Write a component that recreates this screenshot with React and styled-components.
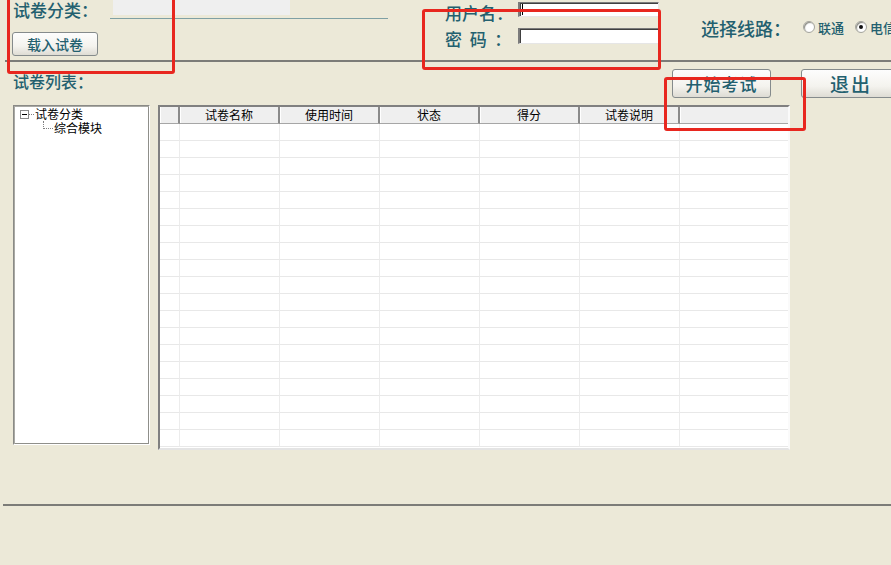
import React from 'react'
import styled, { createGlobalStyle } from 'styled-components'

const GlobalStyle = createGlobalStyle`
  html, body {
    margin: 0;
    padding: 0;
    background: #ece9d8;
  }
  * {
    box-sizing: border-box;
  }
`

const Page = styled.div`
  position: relative;
  width: 891px;
  height: 565px;
  overflow: hidden;
  background: #ece9d8;
  font-family: "Noto Sans CJK SC", "Noto Sans", sans-serif;
  color: #23606f;
`

const TopBar = styled.div`
  display: flex;
  align-items: flex-start;
  height: 60px;
`

const LeftBlock = styled.div`
  flex-shrink: 0;
  width: 445px;
  padding-left: 13px;
`

const CategoryRow = styled.div`
  display: flex;
  align-items: flex-start;
  height: 20px;
`

const Caption = styled.span`
  font-size: 17px;
  font-weight: 500;
  line-height: 20px;
  white-space: nowrap;
`

const LineField = styled.div`
  margin-left: 12px;
  width: 278px;
  height: 19px;
  border-bottom: 1px solid #7fa0a4;
  padding-left: 3px;

  span {
    display: block;
    width: 177px;
    height: 15px;
    background: #efefef;
  }
`

const Button = styled.button`
  display: flex;
  align-items: center;
  justify-content: center;
  flex-shrink: 0;
  width: ${p => p.w}px;
  height: ${p => p.h}px;
  padding: 0;
  border: 1px solid #858b8c;
  border-radius: 3px;
  background: linear-gradient(#fdfdfd, #f4f3ee 60%, #dedcd4);
  color: #23606f;
  font-family: "Noto Sans CJK SC", sans-serif;
  font-size: ${p => p.size}px;
  font-weight: 500;
  letter-spacing: ${p => p.spacing || 0}px;
  white-space: nowrap;
`

const LoadButton = styled(Button)`
  margin-top: 12px;
  margin-left: -1px;
`

const MidBlock = styled.div`
  flex-shrink: 0;
  width: 256px;
  padding-top: 2px;
`

const LoginRow = styled.div`
  display: flex;
  align-items: flex-start;
  height: ${p => p.h}px;
`

const LoginLabel = styled.span`
  width: 73px;
  font-size: 17px;
  font-weight: 500;
  line-height: 20px;
  margin-top: ${p => p.top || 0}px;
  white-space: pre;
`

const TextInput = styled.div`
  width: 141px;
  height: ${p => p.h}px;
  background: #fff;
  border-style: solid;
  border-width: 1px 1px 1px 2px;
  border-color: #7b7b7b #e6e6e6 #e6e6e6 #7b7b7b;
  box-shadow: inset 1px 1px 0 #404040;
  position: relative;
`

const Caret = styled.span`
  position: absolute;
  left: 2px;
  top: 1px;
  width: 1px;
  height: 11px;
  background: #000;
`

const RightBlock = styled.div`
  flex: 1;
  min-width: 0;
  display: flex;
  align-items: center;
  padding-top: 17px;
  white-space: nowrap;
`

const RouteLabel = styled.span`
  font-size: 18px;
  font-weight: 500;
  line-height: 22px;
  margin-right: 12px;
`

const Radio = styled.span`
  flex-shrink: 0;
  display: inline-block;
  width: 12px;
  height: 12px;
  border-radius: 50%;
  background: #fff;
  border: 1px solid #a4a49c;
  box-shadow: inset 1px 1px 1px #8c8c84;
  position: relative;
  margin-right: 3px;
  margin-top: -2px;

  &::after {
    content: '';
    display: ${p => (p.checked ? 'block' : 'none')};
    position: absolute;
    left: 3px;
    top: 3px;
    width: 4px;
    height: 4px;
    border-radius: 50%;
    background: #111;
  }
`

const RadioText = styled.span`
  flex-shrink: 0;
  font-size: 13px;
  font-weight: 500;
  line-height: 18px;
  margin-right: 11px;
`

const Divider = styled.div`
  margin-left: ${p => p.left}px;
  margin-top: ${p => p.top || 0}px;
  height: 2px;
  background: #7c7c78;
`

const ListHeader = styled.div`
  display: flex;
  align-items: flex-start;
  height: 43px;
  padding-left: 13px;
`

const ListTitle = styled.span`
  flex-shrink: 0;
  width: 659px;
  padding-top: 9px;
  font-size: 16px;
  font-weight: 500;
  line-height: 20px;
`

const StartButton = styled(Button)`
  margin-top: 7px;
  margin-right: 30px;
`

const ExitButton = styled(Button)`
  margin-top: 7px;
`

const Content = styled.div`
  display: flex;
  align-items: flex-start;
  gap: 8px;
  padding-left: 13px;
`

const Tree = styled.div`
  flex-shrink: 0;
  width: 137px;
  height: 340px;
  background: #fff;
  border-style: solid;
  border-width: 1px;
  border-color: #8a8a86 #fff #fff #8a8a86;
  box-shadow: inset 1px 1px 0 #a9a9a4, inset -1px -1px 0 #8f8f8a;
  padding: 1px 0 0 6px;
  color: #000;
  font-size: 12px;
`

const TreeNode = styled.div`
  display: flex;
  align-items: center;
  height: 14px;
  padding-left: ${p => p.indent}px;
`

const Expander = styled.span`
  width: 9px;
  height: 9px;
  border: 1px solid #8a8a8a;
  background: #fff;
  position: relative;

  &::after {
    content: '';
    position: absolute;
    left: 1px;
    top: 3px;
    width: 5px;
    height: 1px;
    background: #000;
  }
`

const DotLine = styled.span`
  width: ${p => p.w}px;
  border-top: 1px dotted #808080;
  margin-right: 1px;
`

const Elbow = styled.span`
  width: 10px;
  height: 8px;
  margin: -6px 1px 0 0;
  border-left: 1px dotted #808080;
  border-bottom: 1px dotted #808080;
`

const NodeText = styled.span`
  line-height: 14px;
  white-space: nowrap;
`

const Grid = styled.div`
  flex-shrink: 0;
  width: 632px;
  height: 345px;
  background: #fff;
  border-style: solid;
  border-width: 2px;
  border-color: #808080 #fafafa #e4e4e4 #808080;
  overflow: hidden;
`

const Row = styled.div`
  display: grid;
  grid-template-columns: 20px repeat(5, 100px) 1fr;
  height: 17px;
`

const HeadCell = styled.div`
  height: 17px;
  background: #efefef;
  border-right: 2px solid #8a8a8a;
  border-bottom: 1px solid #a6a6a6;
  box-shadow: inset 1px 0 0 #fff;
  font-size: 12px;
  line-height: 16px;
  color: #000;
  text-align: center;
  white-space: nowrap;

  &:last-child {
    border-right: none;
  }
`

const Cell = styled.div`
  border-right: 1px solid #ececec;
  border-bottom: 1px solid #e8e8e8;

  &:last-child {
    border-right: none;
  }
`

const Mark = styled.div`
  position: absolute;
  left: ${p => p.x}px;
  top: ${p => p.y}px;
  width: ${p => p.w}px;
  height: ${p => p.h}px;
  border: 3px solid #e8271f;
  border-radius: 3px;
  pointer-events: none;
`

const columns = ['', '试卷名称', '使用时间', '状态', '得分', '试卷说明', '']
const rows = Array.from({ length: 19 }, (_, i) => i)

const App = () => (
  <Page>
    <GlobalStyle />
    <TopBar>
      <LeftBlock>
        <CategoryRow>
          <Caption>试卷分类：</Caption>
          <LineField><span /></LineField>
        </CategoryRow>
        <LoadButton w={86} h={24} size={14}>载入试卷</LoadButton>
      </LeftBlock>
      <MidBlock>
        <LoginRow h={26}>
          <LoginLabel top={1}>用户名：</LoginLabel>
          <TextInput h={15}><Caret /></TextInput>
        </LoginRow>
        <LoginRow h={20}>
          <LoginLabel top={1}>{'密  码  ：'}</LoginLabel>
          <TextInput h={16} />
        </LoginRow>
      </MidBlock>
      <RightBlock>
        <RouteLabel>选择线路：</RouteLabel>
        <Radio />
        <RadioText>联通</RadioText>
        <Radio checked />
        <RadioText>电信</RadioText>
      </RightBlock>
    </TopBar>
    <Divider left={5} />

    <ListHeader>
      <ListTitle>试卷列表：</ListTitle>
      <StartButton w={99} h={29} size={17} spacing={1}>开始考试</StartButton>
      <ExitButton w={100} h={29} size={19} spacing={2}>退出</ExitButton>
    </ListHeader>

    <Content>
      <Tree>
        <TreeNode indent={0}>
          <Expander />
          <DotLine w={5} />
          <NodeText>试卷分类</NodeText>
        </TreeNode>
        <TreeNode indent={23}>
          <Elbow />
          <NodeText>综合模块</NodeText>
        </TreeNode>
      </Tree>
      <Grid>
        <Row>
          {columns.map((c, i) => (
            <HeadCell key={i}>{c}</HeadCell>
          ))}
        </Row>
        {rows.map(r => (
          <Row key={r}>
            {columns.map((_, i) => (
              <Cell key={i} />
            ))}
          </Row>
        ))}
      </Grid>
    </Content>

    <Divider left={3} top={54} />

    <Mark x={7} y={-4} w={168} h={78} />
    <Mark x={422} y={9} w={239} h={61} />
    <Mark x={664} y={77} w={142} h={54} />
  </Page>
)

export default App
